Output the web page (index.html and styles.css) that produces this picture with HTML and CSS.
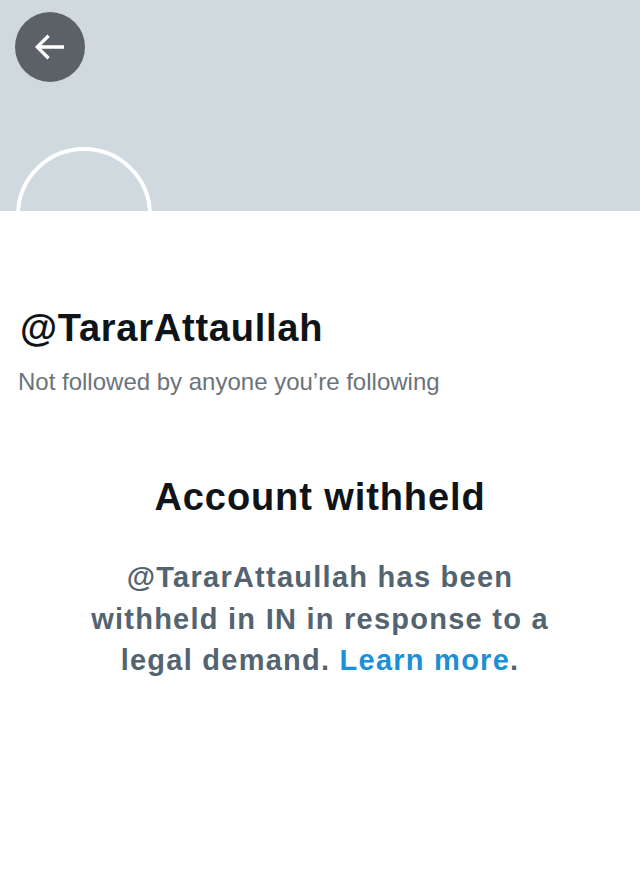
FILE: index.html
```
<!DOCTYPE html>
<html>
<head>
<meta charset="utf-8">
<link rel="stylesheet" href="styles.css">
</head>
<body>
<div class="page">
  <header class="banner">
    <button class="back" aria-label="Back">
      <svg class="back-icon" viewBox="0 0 24 24"><path d="M7.414 13l5.043 5.04-1.414 1.42L3.586 12l7.457-7.46 1.414 1.42L7.414 11H21v2H7.414z" fill="#fff"/></svg>
    </button>
    <div class="avatar"></div>
  </header>
  <section class="profile">
    <h1 class="handle">@TararAttaullah</h1>
    <p class="followers">Not followed by anyone you’re following</p>
  </section>
  <section class="withheld">
    <h2 class="title">Account withheld</h2>
    <p class="message">@TararAttaullah has been withheld in IN in response to a legal demand. <a class="link" href="#">Learn more</a>.</p>
  </section>
</div>
</body>
</html>
```
FILE: styles.css
```
* { box-sizing: border-box; }
html, body { margin: 0; padding: 0; background: #fff; }
body { font-family: "Liberation Sans", Arial, sans-serif; }
.page { width: 640px; min-height: 884px; background: #fff; }
.banner { position: relative; height: 211px; background: #cfd9de; }
.back {
  position: absolute; left: 15px; top: 12px;
  width: 70px; height: 70px; border-radius: 50%;
  border: 0; padding: 0; background: #5b6166;
  display: flex; align-items: center; justify-content: center;
}
.back-icon { width: 40px; height: 40px; margin-left: -2px; }
.avatar {
  position: absolute; left: 16px; top: 147px;
  width: 136px; height: 136px; border-radius: 50%;
  border: 4px solid #fff; background: transparent;
}
.profile { padding: 94px 18px 0 20px; }
.handle { margin: 0; font-size: 38px; line-height: 46px; font-weight: 700; color: #0f1419; letter-spacing: 0.75px; }
.followers { margin: 16px 0 0 -2px; font-size: 24px; line-height: 30px; color: #6b737a; }
.withheld { padding: 77px 20px 0; text-align: center; }
.title { margin: 0; font-size: 38px; line-height: 46px; font-weight: 700; color: #0f1419; letter-spacing: 0.9px; }
.message { margin: 37px auto 0; max-width: 500px; font-size: 29px; line-height: 41.5px; font-weight: 700; color: #536471; letter-spacing: 1.25px; }
.link { color: #1d8fd6; text-decoration: none; }
```
